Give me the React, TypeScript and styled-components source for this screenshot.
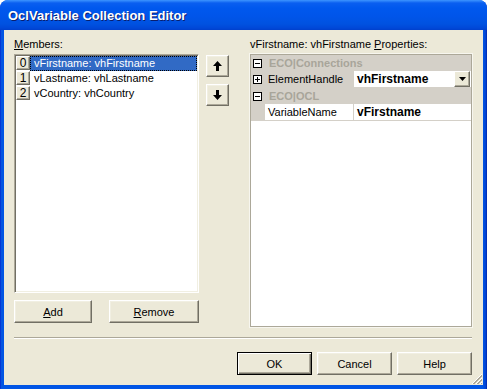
import React from 'react'
import { styled, createGlobalStyle } from 'styled-components'

const GlobalStyle = createGlobalStyle`
  html, body {
    margin: 0;
    padding: 0;
    background: #ffffff;
  }
  body {
    font-family: 'Liberation Sans', Arial, sans-serif;
    font-size: 11px;
    color: #000;
  }
`

const colors = {
  face: '#ECE9D8',
  shadow: '#ACA899',
  darkShadow: '#716F64',
  light: '#F1EFE2',
  gridLine: '#D4D0C8',
  highlight: '#316AC5',
}

const Window = styled.div`
  width: 487px;
  height: 389px;
  display: flex;
  flex-direction: column;
  background: linear-gradient(to right, #0019cf 0px, #0855dd 1px, #0055e5 3px, #0055e5 483px, #0040cf 486px, #001ea0 487px);
  border-radius: 8px 8px 0 0;
  overflow: hidden;
  box-sizing: border-box;
`

const TitleBar = styled.div`
  height: 30px;
  flex: none;
  display: flex;
  align-items: center;
  padding-left: 8px;
  background: linear-gradient(
    to bottom,
    #3d95ff 0px,
    #0a5ff0 3px,
    #0058ee 8px,
    #0055ea 16px,
    #0052e0 24px,
    #0048d8 28px,
    #0040cc 30px
  );
  color: #fff;
  font-weight: 700;
  font-size: 13px;
  text-shadow: 1px 1px 0 #0a1e6e;
`

const Client = styled.div`
  position: relative;
  flex: 1;
  margin: 0 4px 4px 4px;
  background: ${colors.face};
  padding: 8px 11px 0 10px;
  display: flex;
  flex-direction: column;
`

const MainRow = styled.div`
  display: flex;
  height: 289px;
`

const Column = styled.div<{ $width: number; $gap?: number }>`
  display: flex;
  flex-direction: column;
  width: ${(p) => p.$width}px;
  margin-left: ${(p) => p.$gap ?? 0}px;
`

const Label = styled.div`
  height: 13px;
  line-height: 13px;
  margin-bottom: 3px;
  white-space: nowrap;
`

const Key = styled.span`
  text-decoration: underline;
  text-underline-offset: 1px;
`

const Sunken = styled.div`
  flex: 1;
  background: #fff;
  border: 1px solid;
  border-color: ${colors.shadow} #fff #fff ${colors.shadow};
  box-shadow: inset 1px 1px 0 ${colors.darkShadow}, inset -1px -1px 0 ${colors.light};
  padding: 1px;
`

const ListRow = styled.div`
  display: flex;
  height: 15px;
`

const IndexBox = styled.div`
  width: 14px;
  height: 14px;
  box-sizing: border-box;
  background: ${colors.face};
  border: 1px solid;
  border-color: #fff ${colors.darkShadow} ${colors.darkShadow} #fff;
  box-shadow: inset -1px -1px 0 ${colors.shadow};
  display: flex;
  align-items: center;
  justify-content: center;
  font-size: 12px;
  line-height: 12px;
`

const ItemText = styled.div<{ $selected?: boolean }>`
  flex: 1;
  height: 15px;
  line-height: 14px;
  padding-left: 4px;
  box-sizing: border-box;
  white-space: nowrap;
  background: ${(p) => (p.$selected ? colors.highlight : 'transparent')};
  color: ${(p) => (p.$selected ? '#fff' : '#000')};
  outline: ${(p) => (p.$selected ? '1px dotted #000' : 'none')};
  outline-offset: -1px;
`

const ButtonRow = styled.div`
  display: flex;
  justify-content: space-between;
  margin-top: 7px;
  margin-bottom: 4px;
`

const Button = styled.button<{ $width: number; $height?: number; $default?: boolean }>`
  width: ${(p) => p.$width}px;
  height: ${(p) => p.$height ?? 23}px;
  box-sizing: border-box;
  padding: 0;
  font-family: inherit;
  font-size: 11px;
  color: #000;
  background: ${colors.face};
  border: 1px solid;
  border-color: ${(p) =>
    p.$default ? '#000' : `#fff ${colors.darkShadow} ${colors.darkShadow} #fff`};
  box-shadow: ${(p) =>
    p.$default
      ? `inset 1px 1px 0 #fff, inset -1px -1px 0 ${colors.darkShadow}, inset -2px -2px 0 ${colors.shadow}`
      : `inset -1px -1px 0 ${colors.shadow}, inset 1px 1px 0 ${colors.light}`};
  display: flex;
  align-items: center;
  justify-content: center;
`

const ArrowColumn = styled.div`
  display: flex;
  flex-direction: column;
  gap: 7px;
  margin-left: 7px;
  padding-top: 17px;
`

const GridBox = styled.div`
  flex: 1;
  background: #fff;
  border: 1px solid ${colors.shadow};
  box-shadow: 0 0 0 1px #f7f6ef;
  display: flex;
  flex-direction: column;
`

const CategoryRow = styled.div`
  height: 16px;
  display: flex;
  align-items: center;
  background: ${colors.gridLine};
  color: #a8a59a;
  font-weight: 700;
  gap: 7px;
  padding-left: 2px;
`

const PropRow = styled.div`
  height: 17px;
  display: flex;
  box-sizing: border-box;
`

const MarginCell = styled.div`
  width: 14px;
  background: ${colors.gridLine};
  display: flex;
  align-items: center;
  padding-left: 2px;
  box-sizing: border-box;
`

const NameCell = styled.div<{ $selected?: boolean }>`
  width: 89px;
  box-sizing: border-box;
  padding-left: 3px;
  line-height: 16px;
  background: ${(p) => (p.$selected ? colors.gridLine : '#fff')};
  border-right: 1px solid ${colors.gridLine};
  border-bottom: 1px solid ${colors.gridLine};
  white-space: nowrap;
`

const ValueCell = styled.div`
  flex: 1;
  display: flex;
  align-items: center;
  justify-content: space-between;
  padding-left: 3px;
  padding-right: 1px;
  font-weight: 700;
  font-size: 12px;
  border-bottom: 1px solid ${colors.gridLine};
`

const DropButton = styled.div`
  width: 16px;
  height: 16px;
  box-sizing: border-box;
  background: ${colors.face};
  border: 1px solid;
  border-color: #fff ${colors.darkShadow} ${colors.darkShadow} #fff;
  box-shadow: inset -1px -1px 0 ${colors.shadow};
  display: flex;
  align-items: center;
  justify-content: center;
  align-self: flex-start;
`

const Separator = styled.div`
  margin-top: 10px;
  height: 0;
  border-top: 1px solid ${colors.shadow};
  border-bottom: 1px solid #fff;
`

const Footer = styled.div`
  display: flex;
  justify-content: flex-end;
  gap: 5px;
  margin-top: 13px;
`

const Grip = styled.svg`
  position: absolute;
  right: 0;
  bottom: 0;
`

const ToggleBox = ({ open }: { open: boolean }) => (
  <svg width="9" height="9" viewBox="0 0 9 9">
    <rect x="0.5" y="0.5" width="8" height="8" fill="#fff" stroke="#000" />
    <path d="M2 4.5h5" stroke="#000" />
    {!open && <path d="M4.5 2v5" stroke="#000" />}
  </svg>
)

const ArrowIcon = ({ down }: { down?: boolean }) => (
  <svg
    width="9"
    height="10"
    viewBox="0 0 9 10"
    style={down ? { transform: 'rotate(180deg)' } : undefined}
  >
    <path d="M4.5 0L9 5H6v5H3V5H0z" fill="#000" />
  </svg>
)

const members = [
  { index: 0, text: 'vFirstname: vhFirstname' },
  { index: 1, text: 'vLastname: vhLastname' },
  { index: 2, text: 'vCountry: vhCountry' },
]

export default function App() {
  return (
    <>
      <GlobalStyle />
      <Window>
        <TitleBar>OclVariable Collection Editor</TitleBar>
        <Client>
          <MainRow>
            <Column $width={185}>
              <Label>
                <Key>M</Key>embers:
              </Label>
              <Sunken>
                {members.map((m) => (
                  <ListRow key={m.index}>
                    <IndexBox>{m.index}</IndexBox>
                    <ItemText $selected={m.index === 0}>{m.text}</ItemText>
                  </ListRow>
                ))}
              </Sunken>
              <ButtonRow>
                <Button $width={78}>
                  <Key>A</Key>dd
                </Button>
                <Button $width={90}>
                  <Key>R</Key>emove
                </Button>
              </ButtonRow>
            </Column>

            <ArrowColumn>
              <Button $width={23} $height={22}>
                <ArrowIcon />
              </Button>
              <Button $width={23} $height={22}>
                <ArrowIcon down />
              </Button>
            </ArrowColumn>

            <Column $width={222} $gap={21}>
              <Label>
                vFirstname: vhFirstname <Key>P</Key>roperties:
              </Label>
              <GridBox>
                <CategoryRow>
                  <ToggleBox open />
                  ECO|Connections
                </CategoryRow>
                <PropRow>
                  <MarginCell>
                    <ToggleBox open={false} />
                  </MarginCell>
                  <NameCell $selected>ElementHandle</NameCell>
                  <ValueCell>
                    vhFirstname
                    <DropButton>
                      <svg width="7" height="4" viewBox="0 0 7 4">
                        <path d="M0 0h7L3.5 4z" fill="#000" />
                      </svg>
                    </DropButton>
                  </ValueCell>
                </PropRow>
                <CategoryRow>
                  <ToggleBox open />
                  ECO|OCL
                </CategoryRow>
                <PropRow>
                  <MarginCell />
                  <NameCell>VariableName</NameCell>
                  <ValueCell>vFirstname</ValueCell>
                </PropRow>
              </GridBox>
            </Column>
          </MainRow>

          <Separator />

          <Footer>
            <Button $width={75} $default>
              OK
            </Button>
            <Button $width={75}>Cancel</Button>
            <Button $width={75}>Help</Button>
          </Footer>

          <Grip width="13" height="13" viewBox="0 0 13 13">
            <path d="M12 2L2 12M12 6L6 12M12 10L10 12" stroke="#fff" />
            <path d="M12 3L3 12M12 7L7 12M12 11L11 12" stroke="#ACA899" />
            <path d="M12 4L4 12M12 8L8 12" stroke="#ACA899" />
          </Grip>
        </Client>
      </Window>
    </>
  )
}
